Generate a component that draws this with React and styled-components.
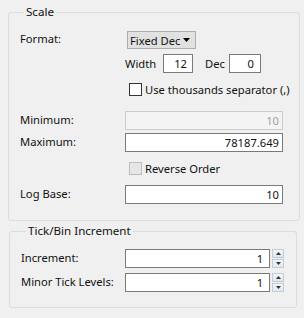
import styled, { createGlobalStyle } from "styled-components";

const GlobalStyle = createGlobalStyle`
    html, body {
        margin: 0;
        background: #f0f0f0;
    }
    body {
        font-family: "Noto Sans", "Open Sans", sans-serif;
        font-size: 11.2px;
        color: #111;
    }
`;

const Page = styled.div`
    width: 304px;
    height: 318px;
    box-sizing: border-box;
    padding: 4px 0 0 8px;
    display: flex;
    flex-direction: column;
    align-items: flex-start;
`;

const Group = styled.fieldset`
    box-sizing: border-box;
    min-width: 0;
    width: ${props => props.$width}px;
    margin: ${props => props.$margin};
    padding: ${props => props.$padding};
    border: 1px solid #dcdcdc;
    border-radius: 3px;
`;

const Legend = styled.legend`
    margin-left: ${props => props.$indent}px;
    padding: 0 2px;
    line-height: 16px;
    font-size: 11.6px;
`;

const Row = styled.div`
    display: grid;
    grid-template-columns: ${props => props.$labelWidth || 105}px 1fr;
    align-items: center;
    height: ${props => props.$h || 19}px;
    margin-top: ${props => props.$mt || 0}px;
`;

const Label = styled.span`
    white-space: nowrap;
    line-height: 16px;
    margin-top: -2px;
`;

const Controls = styled.div`
    display: flex;
    align-items: center;
    height: 100%;
`;

const Dropdown = styled.div`
    box-sizing: border-box;
    display: flex;
    align-items: center;
    width: 69px;
    height: 18px;
    margin-left: 2px;
    padding-left: 2px;
    background: #e1e1e1;
    border: 1px solid #adadad;
    white-space: nowrap;
    svg {
        margin-left: auto;
        margin-right: 5px;
    }
`;

const TextBox = styled.input`
    box-sizing: border-box;
    width: ${props => props.$w ? `${props.$w}px` : "100%"};
    height: 19px;
    margin: 0;
    padding: 0 ${props => props.$pr || 3}px 0 2px;
    font: inherit;
    color: #111;
    text-align: right;
    background: #fff;
    border: 1px solid #7a7a7a;
    border-radius: 0;
    outline: none;
    &:disabled {
        color: #a0a0a0;
        background: #f4f4f4;
        border-color: #cccccc;
    }
`;

const InlineText = styled.span`
    display: inline-block;
    width: ${props => props.$w}px;
    margin-left: ${props => props.$ml || 0}px;
    white-space: nowrap;
`;

const Check = styled.label`
    display: flex;
    align-items: center;
    gap: 3px;
    margin-left: 4px;
    white-space: nowrap;
`;

const Box = styled.span`
    box-sizing: border-box;
    width: 13px;
    height: 13px;
    background: ${props => props.$disabled ? "#e6e6e6" : "#fff"};
    border: 1px solid ${props => props.$disabled ? "#bcbcbc" : "#333"};
`;

const Spinner = styled.div`
    display: flex;
    flex-direction: column;
    gap: 1px;
    width: 13px;
    height: 19px;
    margin-left: 2px;
`;

const SpinButton = styled.div`
    box-sizing: border-box;
    flex: 1;
    display: flex;
    align-items: center;
    justify-content: center;
    background: linear-gradient(#f4f7fb, #dfe6ee);
    border: 1px solid #c3cbd6;
`;

const Arrow = ({ up }) => (
    <svg width="5" height="3" viewBox="0 0 5 3">
        <polygon points={up ? "0,3 5,3 2.5,0" : "0,0 5,0 2.5,3"} fill="#333" />
    </svg>
);

const Spin = () => (
    <Spinner>
        <SpinButton><Arrow up /></SpinButton>
        <SpinButton><Arrow /></SpinButton>
    </Spinner>
);

export default function App() {
    return (
        <>
            <GlobalStyle />
            <Page>
                <Group $width={292} $margin="0" $padding="11px 16px 16px 11px">
                    <Legend $indent={4}>Scale</Legend>
                    <Row $h={18}>
                        <Label>Format:</Label>
                        <Controls>
                            <Dropdown>
                                Fixed Dec
                                <svg width="7" height="4" viewBox="0 0 7 4">
                                    <polygon points="0,0 7,0 3.5,4" fill="#000" />
                                </svg>
                            </Dropdown>
                        </Controls>
                    </Row>
                    <Row $mt={5}>
                        <span />
                        <Controls>
                            <InlineText $w={38}>Width</InlineText>
                            <TextBox $w={30} $pr={5} readOnly defaultValue="12" />
                            <InlineText $w={24} $ml={12}>Dec</InlineText>
                            <TextBox $w={32} $pr={6} readOnly defaultValue="0" />
                        </Controls>
                    </Row>
                    <Row $mt={7}>
                        <span />
                        <Check><Box />Use thousands separator (,)</Check>
                    </Row>
                    <Row $mt={12}>
                        <Label>Minimum:</Label>
                        <TextBox disabled defaultValue="10" />
                    </Row>
                    <Row $mt={3}>
                        <Label>Maximum:</Label>
                        <TextBox readOnly defaultValue="78187.649" />
                    </Row>
                    <Row $mt={7}>
                        <span />
                        <Check><Box $disabled />Reverse Order</Check>
                    </Row>
                    <Row $mt={7}>
                        <Label>Log Base:</Label>
                        <TextBox readOnly defaultValue="10" />
                    </Row>
                </Group>
                <Group $width={288} $margin="2px 0 0 1px" $padding="10px 12px 15px 11px">
                    <Legend $indent={5}>Tick/Bin Increment</Legend>
                    <Row $labelWidth={104}>
                        <Label>Increment:</Label>
                        <Controls>
                            <TextBox $pr={6} readOnly defaultValue="1" />
                            <Spin />
                        </Controls>
                    </Row>
                    <Row $labelWidth={104} $mt={5}>
                        <Label>Minor Tick Levels:</Label>
                        <Controls>
                            <TextBox $pr={6} readOnly defaultValue="1" />
                            <Spin />
                        </Controls>
                    </Row>
                </Group>
            </Page>
        </>
    );
}
